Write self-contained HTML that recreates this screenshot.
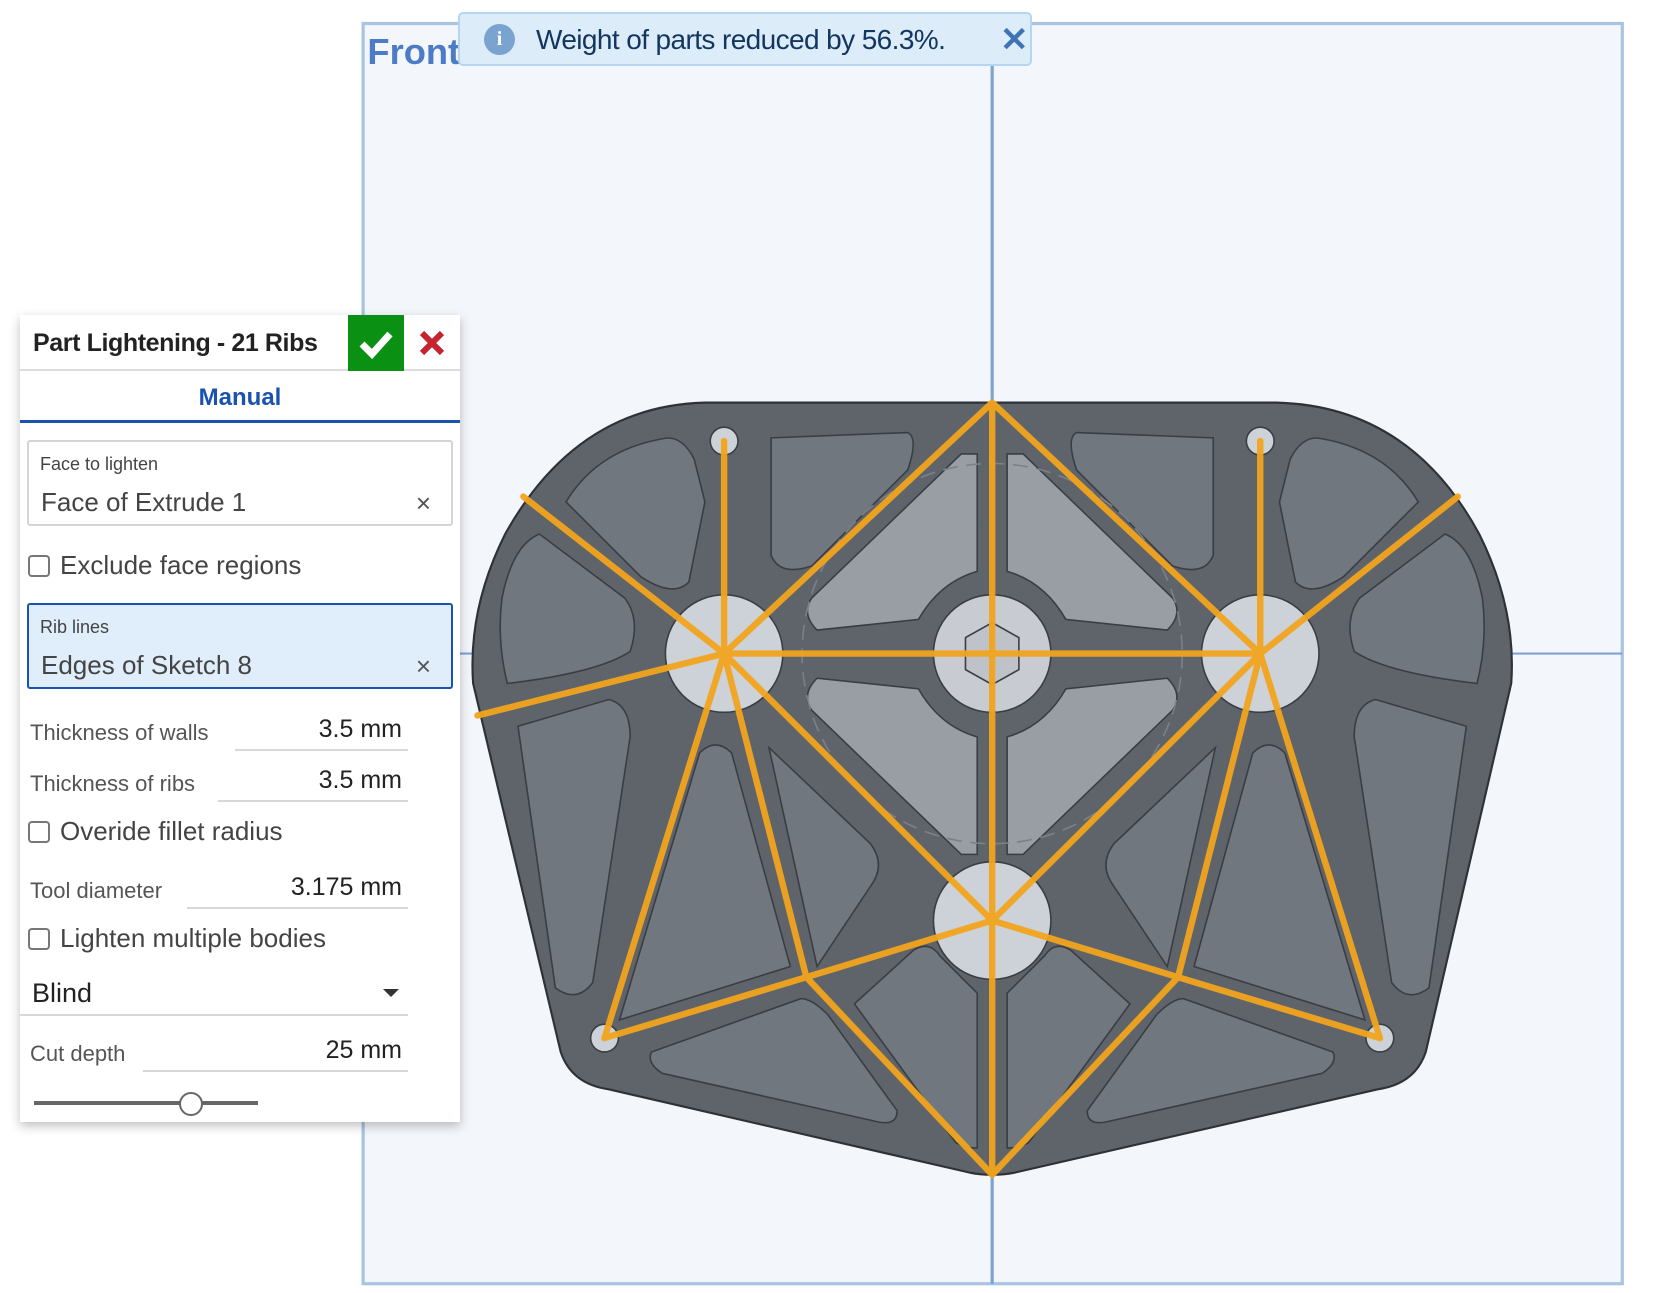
<!DOCTYPE html>
<html><head><meta charset="utf-8"><style>
html,body{margin:0;padding:0;width:1674px;height:1293px;overflow:hidden;background:#fff;font-family:"Liberation Sans",sans-serif}
svg.bg{position:absolute;left:0;top:0}
.toast{position:absolute;left:458px;top:12px;width:574px;height:54px;background:#dcecf8;border:2px solid #b5d6f0;border-radius:5px;box-sizing:border-box}
.toast .i{position:absolute;left:24px;top:10px;width:31px;height:31px;border-radius:50%;background:#7aa3d0;color:#fff;font:bold 20px "Liberation Serif",serif;text-align:center;line-height:31px}
.toast .t{position:absolute;left:76px;top:10px;font-size:28px;color:#12365f;letter-spacing:-0.6px}
.toast .x{position:absolute;left:540px;top:6px;font-size:34px;color:#3e73b5;font-weight:bold}
.panel{position:absolute;left:20px;top:315px;width:440px;height:807px;background:#fff;box-shadow:0 4px 10px rgba(0,0,0,.25)}
.hdr{position:absolute;left:0;top:0;width:440px;height:56px;border-bottom:2px solid #ddd;box-sizing:border-box}
.hdr .ti{position:absolute;left:13px;top:14px;font-size:25px;font-weight:bold;color:#222;letter-spacing:-0.4px}
.ok{position:absolute;left:328px;top:0;width:56px;height:56px;background:#0a9114}
.tab{position:absolute;left:0;top:56px;width:440px;height:52px;border-bottom:3px solid #1a52b0;box-sizing:border-box;text-align:center;font-size:24px;font-weight:bold;color:#1a52b0;line-height:54px}
.box{position:absolute;left:7px;width:426px;height:86px;border:2px solid #d4d4d4;border-radius:3px;box-sizing:border-box}
.box .l{position:absolute;left:11px;top:12px;font-size:18px;color:#444}
.box .v{position:absolute;left:12px;top:45px;font-size:26px;color:#444}
.box .c{position:absolute;right:20px;top:46px;font-size:26px;color:#555}
.cb{position:absolute;left:8px;width:22px;height:22px;border:2px solid #777;border-radius:4px;box-sizing:border-box}
.cbl{position:absolute;left:40px;font-size:26px;color:#444}
.fl{position:absolute;left:10px;font-size:22px;color:#555}
.fv{position:absolute;right:52px;font-size:25px;color:#222;text-align:right;border-bottom:2px solid #d8d8d8;padding-right:6px;height:36px;box-sizing:border-box}
</style></head><body>
<svg class="bg" width="1674" height="1293" viewBox="0 0 1567.4 1210.7">
<rect x="340" y="22" width="1179" height="1180" fill="#f3f6fa" stroke="#a9c3e3" stroke-width="3"/>
<line x1="929" y1="22" x2="929" y2="1202" stroke="#7ea3d2" stroke-width="3"/>
<line x1="340" y1="612" x2="1519" y2="612" stroke="#7ea3d2" stroke-width="2"/>
<text x="344" y="60" font-family="Liberation Sans" font-size="34" font-weight="bold" fill="#3a6fc0" opacity=".9">Front</text>
<path d="M660 377 L1195 377 Q1320 380 1385 500 Q1420 570 1415 640 L1335 985 Q1325 1015 1290 1020 L950 1098 Q929 1102 908 1098 L570 1020 Q535 1015 525 985 L443 640 Q438 570 473 500 Q540 380 660 377 Z" fill="#5f646b" stroke="#2e3136" stroke-width="2"/>
<g fill="#71777f" stroke="#3a3e44" stroke-width="1.5">
<path d="M530 470 Q560 420 625 410 Q640 410 650 430 L660 470 L645 545 Q630 560 600 540 Z"/>
<path d="M470 560 Q480 510 505 500 L585 560 Q600 580 590 610 Q560 630 475 640 Q465 600 470 560Z"/>
<path d="M722 410 L850 405 Q860 410 850 440 L760 530 Q730 540 722 520 Z"/>
<path d="M485 680 L570 655 Q590 660 590 690 L555 920 Q540 940 520 925 Z"/>
<path d="M655 705 Q670 690 685 705 L740 905 L580 955 Z"/>
<path d="M720 700 L815 790 Q830 810 815 830 L765 905 Z"/>
<path d="M610 985 L750 935 Q760 935 775 950 L840 1040 Q840 1055 820 1050 L620 1005 Q605 995 610 985Z"/>
<path d="M800 940 L855 890 Q870 880 880 895 L915 930 L915 1075 Q905 1075 895 1070 Z"/>
<path d="M1328 470 Q1298 420 1233 410 Q1218 410 1208 430 L1198 470 L1213 545 Q1228 560 1258 540 Z"/>
<path d="M1388 560 Q1378 510 1353 500 L1273 560 Q1258 580 1268 610 Q1298 630 1383 640 Q1393 600 1388 560Z"/>
<path d="M1136 410 L1008 405 Q998 410 1008 440 L1098 530 Q1128 540 1136 520 Z"/>
<path d="M1373 680 L1288 655 Q1268 660 1268 690 L1303 920 Q1318 940 1338 925 Z"/>
<path d="M1203 705 Q1188 690 1173 705 L1118 905 L1278 955 Z"/>
<path d="M1138 700 L1043 790 Q1028 810 1043 830 L1093 905 Z"/>
<path d="M1248 985 L1108 935 Q1098 935 1083 950 L1018 1040 Q1018 1055 1038 1050 L1238 1005 Q1253 995 1248 985Z"/>
<path d="M1058 940 L1003 890 Q988 880 978 895 L943 930 L943 1075 Q953 1075 963 1070 Z"/>
</g>
<g fill="#999ea5" stroke="#3a3e44" stroke-width="1.5">
<path d="M915 425 L915 535 Q880 545 860 580 L765 590 Q750 575 760 560 L900 425Z"/>
<path d="M943 425 L943 535 Q978 545 998 580 L1093 590 Q1108 575 1098 560 L958 425Z"/>
<path d="M915 800 L915 690 Q880 680 860 645 L765 635 Q750 650 760 665 L900 800Z"/>
<path d="M943 800 L943 690 Q978 680 998 645 L1093 635 Q1108 650 1098 665 L958 800Z"/>
</g>
<circle cx="929" cy="612" r="178" fill="none" stroke="#7c8188" stroke-width="1.5" stroke-dasharray="14 8"/>
<circle cx="929" cy="612" r="55" fill="#c8ccd2" stroke="#3a3e44" stroke-width="1.5"/>
<polygon points="929,583 954,597 954,627 929,641 904,627 904,597" fill="#bfc3c9" stroke="#3a3e44" stroke-width="1.5"/>
<g fill="#cdd1d8" stroke="#3a3e44" stroke-width="1.5">
<circle cx="678" cy="612" r="55"/><circle cx="1180" cy="612" r="55"/><circle cx="929" cy="862" r="55"/>
<circle cx="678" cy="413" r="13"/><circle cx="1180" cy="413" r="13"/><circle cx="566" cy="972" r="13"/><circle cx="1292" cy="972" r="13"/>
</g>
<g stroke="#f2a51f" stroke-width="6" stroke-linecap="round" opacity=".95">
<path d="M678 612L678 413M678 612L490 465M678 612L447 670M678 612L566 972M678 612L755 915M678 612L929 862M678 612L929 377M678 612L1180 612"/>
<path d="M1180 612L1180 413M1180 612L1365 465M1180 612L1292 972M1180 612L1103 915M1180 612L929 862M1180 612L929 377"/>
<path d="M929 377L929 1100M929 862L755 915M929 862L1103 915M755 915L929 1100M1103 915L929 1100M566 972L755 915M1292 972L1103 915"/>
</g>
</svg>
<div class="toast"><div class="i">i</div><div class="t">Weight of parts reduced by 56.3%.</div><div class="x">✕</div></div>
<div class="panel">
<div class="hdr"><div class="ti">Part Lightening - 21 Ribs</div>
<div class="ok"><svg width="56" height="56"><path d="M14 29 L24 39 L42 19" fill="none" stroke="#fff" stroke-width="7"/></svg></div>
<svg style="position:absolute;left:398px;top:14px" width="28" height="28"><path d="M4 4L24 24M24 4L4 24" stroke="#c5232f" stroke-width="6"/></svg>
</div>
<div class="tab">Manual</div>
<div class="box" style="top:125px"><div class="l">Face to lighten</div><div class="v">Face of Extrude 1</div><div class="c">×</div></div>
<div class="cb" style="top:240px"></div><div class="cbl" style="top:235px">Exclude face regions</div>
<div class="box" style="top:288px;background:#dfeefa;border-color:#1a52b0"><div class="l">Rib lines</div><div class="v">Edges of Sketch 8</div><div class="c">×</div></div>
<div class="fl" style="top:405px">Thickness of walls</div><div class="fv" style="top:400px;width:173px">3.5 mm</div>
<div class="fl" style="top:456px">Thickness of ribs</div><div class="fv" style="top:451px;width:190px">3.5 mm</div>
<div class="cb" style="top:506px"></div><div class="cbl" style="top:501px">Overide fillet radius</div>
<div class="fl" style="top:563px">Tool diameter</div><div class="fv" style="top:558px;width:221px">3.175 mm</div>
<div class="cb" style="top:613px"></div><div class="cbl" style="top:608px">Lighten multiple bodies</div>
<div class="fv" style="top:663px;left:0;width:388px;height:38px;text-align:left;font-size:27px;padding-left:12px">Blind</div>
<div style="position:absolute;left:363px;top:674px;border:8px solid transparent;border-top:8px solid #333;border-bottom:0"></div>
<div class="fl" style="top:726px">Cut depth</div><div class="fv" style="top:721px;width:265px">25 mm</div>
<div style="position:absolute;left:14px;top:786px;width:224px;height:4px;background:#666"></div>
<div style="position:absolute;left:159px;top:777px;width:20px;height:20px;border-radius:50%;background:#fff;border:2px solid #666"></div>
</div>
</body></html>
